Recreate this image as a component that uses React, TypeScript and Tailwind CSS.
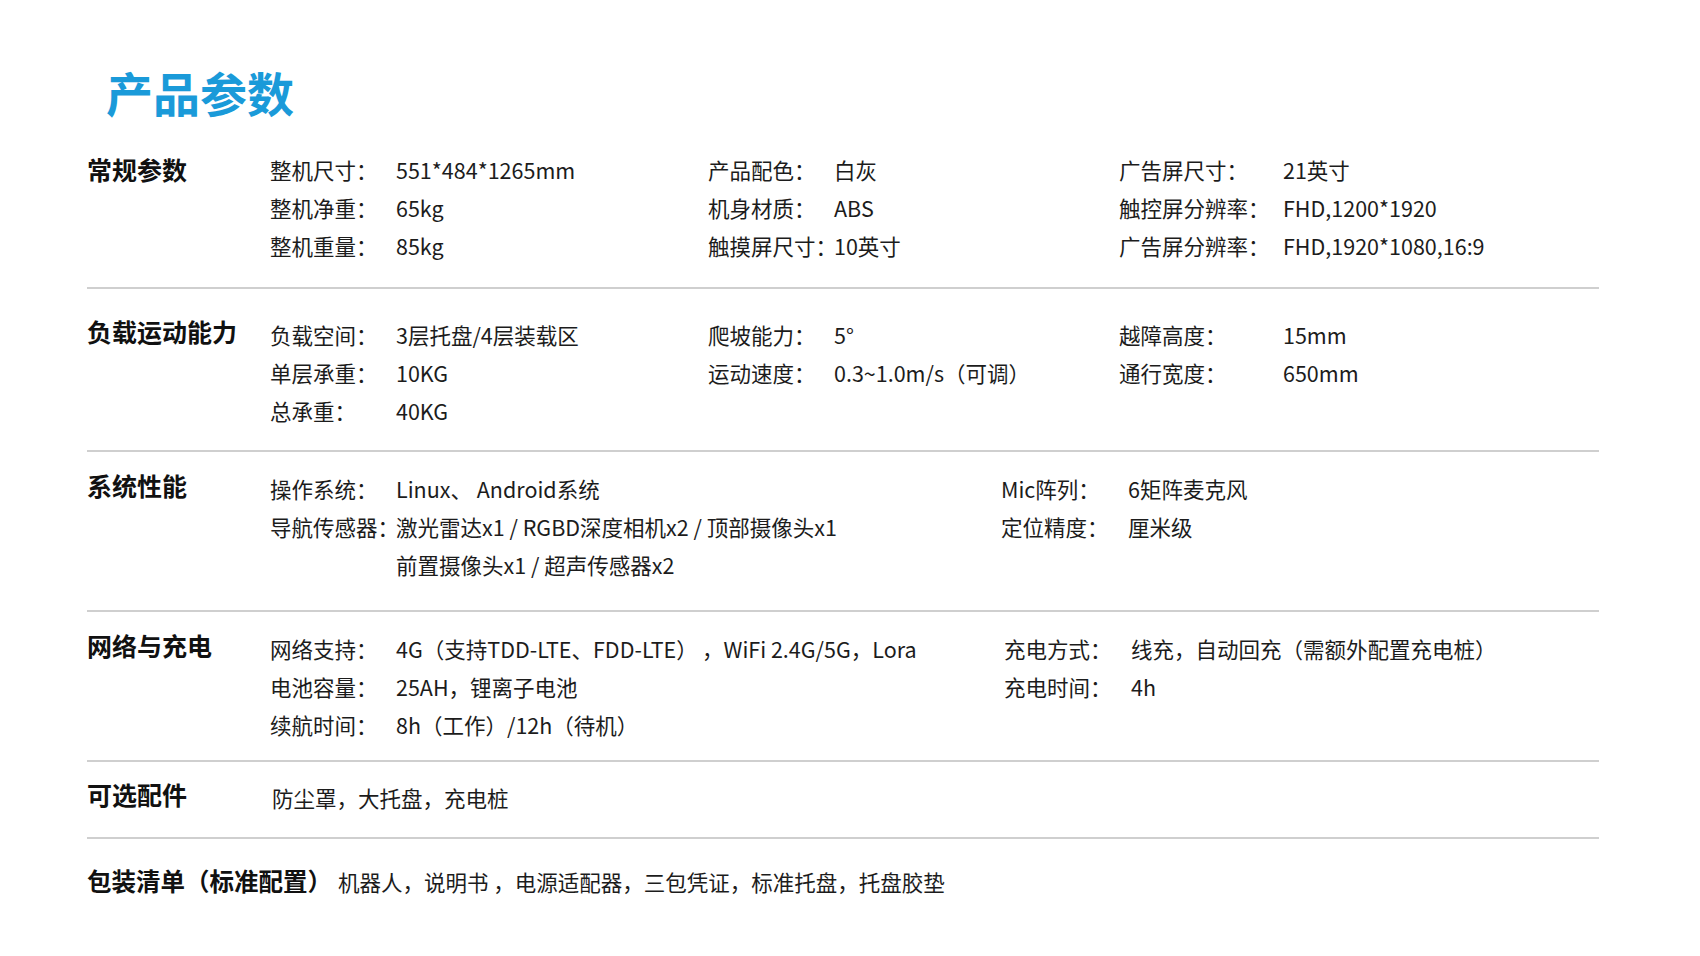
type Item = [string, string]

const font = { fontFamily: '"Noto Sans CJK SC", "Noto Sans", sans-serif' }

function Column({ items, width, labelWidth }: { items: Item[]; width: string; labelWidth: string }) {
  return (
    <div className={`flex flex-col ${width}`}>
      {items.map(([label, value]) => (
        <div key={label} className="flex h-[38px] items-center whitespace-nowrap">
          <span className={`shrink-0 ${labelWidth}`}>{label}</span>
          <span>{value}</span>
        </div>
      ))}
    </div>
  )
}

function Heading({ children, lift = false }: { children: React.ReactNode; lift?: boolean }) {
  return (
    <div className="w-[183px] shrink-0">
      <h2 className={`flex h-[38px] items-center text-[25px] font-bold text-[#111] ${lift ? '-mt-[3px]' : ''}`}>
        {children}
      </h2>
    </div>
  )
}

export default function App() {
  return (
    <div style={font} className="h-[956px] w-[1700px] overflow-hidden bg-white pl-[87px] pr-[101px] text-[21.5px] text-[#1c1c1c]">
      <h1 className="ml-[19px] pt-[68px] text-[47px] font-bold leading-[48px] text-[#1a9ad9]">产品参数</h1>

      <section className="mt-[35px] flex border-b-2 border-[#cfcfcf] pb-[22px]">
        <Heading>常规参数</Heading>
        <Column
          width="w-[438px]"
          labelWidth="w-[126px]"
          items={[
            ['整机尺寸：', '551*484*1265mm'],
            ['整机净重：', '65kg'],
            ['整机重量：', '85kg'],
          ]}
        />
        <Column
          width="w-[411px]"
          labelWidth="w-[126px]"
          items={[
            ['产品配色：', '白灰'],
            ['机身材质：', 'ABS'],
            ['触摸屏尺寸：', '10英寸'],
          ]}
        />
        <Column
          width="flex-1"
          labelWidth="w-[164px]"
          items={[
            ['广告屏尺寸：', '21英寸'],
            ['触控屏分辨率：', 'FHD,1200*1920'],
            ['广告屏分辨率：', 'FHD,1920*1080,16:9'],
          ]}
        />
      </section>

      <section className="flex border-b-2 border-[#cfcfcf] pb-[20px] pt-[27px]">
        <Heading lift>负载运动能力</Heading>
        <Column
          width="w-[438px]"
          labelWidth="w-[126px]"
          items={[
            ['负载空间：', '3层托盘/4层装载区'],
            ['单层承重：', '10KG'],
            ['总承重：', '40KG'],
          ]}
        />
        <Column
          width="w-[411px]"
          labelWidth="w-[126px]"
          items={[
            ['爬坡能力：', '5°'],
            ['运动速度：', '0.3~1.0m/s（可调）'],
          ]}
        />
        <Column
          width="flex-1"
          labelWidth="w-[164px]"
          items={[
            ['越障高度：', '15mm'],
            ['通行宽度：', '650mm'],
          ]}
        />
      </section>

      <section className="flex border-b-2 border-[#cfcfcf] pb-[26px] pt-[18px]">
        <Heading lift>系统性能</Heading>
        <div className="flex w-[731px] flex-col">
          <div className="flex h-[38px] items-center whitespace-nowrap">
            <span className="w-[126px] shrink-0">操作系统：</span>
            <span>Linux、 Android系统</span>
          </div>
          <div className="flex h-[38px] items-center whitespace-nowrap">
            <span className="w-[126px] shrink-0">导航传感器：</span>
            <span>激光雷达x1 / RGBD深度相机x2 / 顶部摄像头x1</span>
          </div>
          <div className="flex h-[38px] items-center whitespace-nowrap pl-[126px]">前置摄像头x1 / 超声传感器x2</div>
        </div>
        <Column
          width="flex-1"
          labelWidth="w-[127px]"
          items={[
            ['Mic阵列：', '6矩阵麦克风'],
            ['定位精度：', '厘米级'],
          ]}
        />
      </section>

      <section className="flex border-b-2 border-[#cfcfcf] pb-[16px] pt-[18px]">
        <Heading lift>网络与充电</Heading>
        <Column
          width="w-[734px]"
          labelWidth="w-[126px]"
          items={[
            ['网络支持：', '4G（支持TDD-LTE、FDD-LTE）\u2009，WiFi 2.4G/5G，Lora'],
            ['电池容量：', '25AH，锂离子电池'],
            ['续航时间：', '8h（工作）/12h（待机）'],
          ]}
        />
        <Column
          width="flex-1"
          labelWidth="w-[127px]"
          items={[
            ['充电方式：', '线充，自动回充（需额外配置充电桩）'],
            ['充电时间：', '4h'],
          ]}
        />
      </section>

      <section className="flex border-b-2 border-[#cfcfcf] pb-[20px] pt-[17px]">
        <Heading lift>可选配件</Heading>
        <div className="ml-[2px] flex h-[38px] items-center">防尘罩，大托盘，充电桩</div>
      </section>

      <section className="flex items-center gap-[6px] pt-[26px]">
        <h2 className="-mt-[3px] flex h-[38px] items-center text-[24.5px] font-bold text-[#111]">包装清单（标准配置）</h2>
        <span>机器人，说明书 ，电源适配器，三包凭证，标准托盘，托盘胶垫</span>
      </section>
    </div>
  )
}
